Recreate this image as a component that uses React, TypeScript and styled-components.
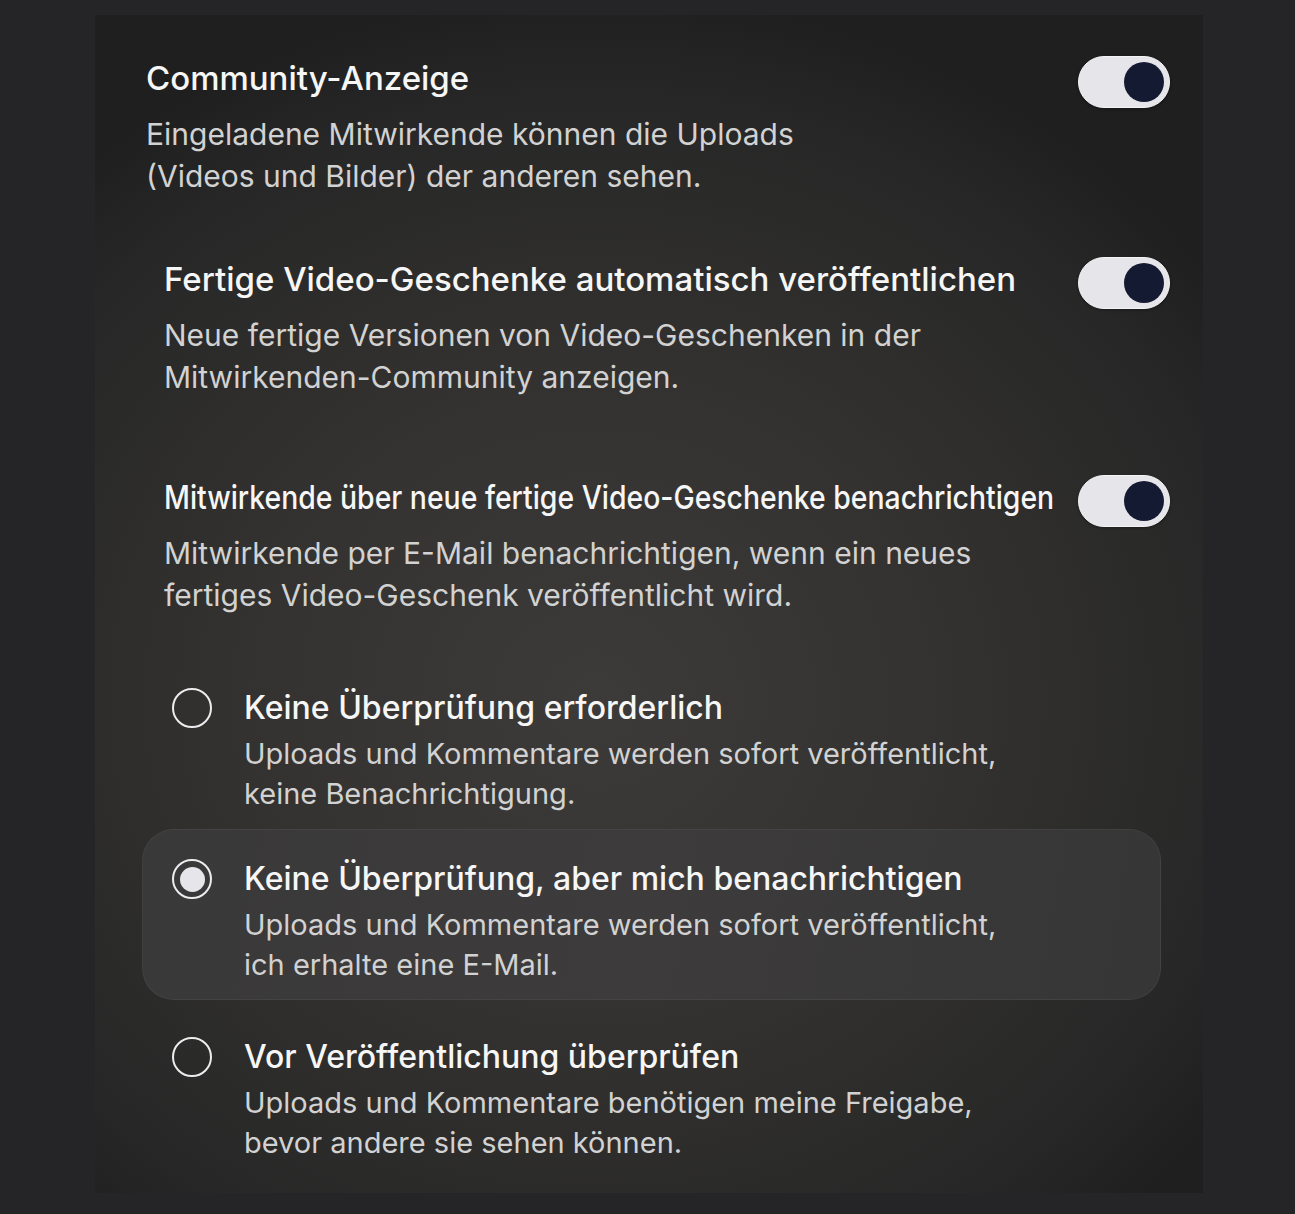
import styled, { createGlobalStyle } from "styled-components";

const GlobalStyle = createGlobalStyle`
    html, body {
        margin: 0;
        padding: 0;
        background: #252427;
    }
    body {
        font-family: Inter, "Noto Sans", "Liberation Sans", sans-serif;
        -webkit-font-smoothing: antialiased;
    }
`

type SectionData = {
    title: string
    text: string[]
    indent: boolean
    space: number
    narrow?: boolean
}

type OptionData = {
    title: string
    text: string[]
    checked: boolean
    space: number
}

const sections: SectionData[] = [{
    title: "Community-Anzeige",
    text: ["Eingeladene Mitwirkende können die Uploads", "(Videos und Bilder) der anderen sehen."],
    indent: false,
    space: 0
}, {
    title: "Fertige Video-Geschenke automatisch veröffentlichen",
    text: ["Neue fertige Versionen von Video-Geschenken in der", "Mitwirkenden-Community anzeigen."],
    indent: true,
    space: 60
}, {
    title: "Mitwirkende über neue fertige Video-Geschenke benachrichtigen",
    text: ["Mitwirkende per E-Mail benachrichtigen, wenn ein neues", "fertiges Video-Geschenk veröffentlicht wird."],
    indent: true,
    space: 77,
    narrow: true
},]

const options: OptionData[] = [{
    title: "Keine Überprüfung erforderlich",
    text: ["Uploads und Kommentare werden sofort veröffentlicht,", "keine Benachrichtigung."],
    checked: false,
    space: 0
}, {
    title: "Keine Überprüfung, aber mich benachrichtigen",
    text: ["Uploads und Kommentare werden sofort veröffentlicht,", "ich erhalte eine E-Mail."],
    checked: true,
    space: 0
}, {
    title: "Vor Veröffentlichung überprüfen",
    text: ["Uploads und Kommentare benötigen meine Freigabe,", "bevor andere sie sehen können."],
    checked: false,
    space: 7
},]

export default function App() {
    return (
        <>
            <GlobalStyle/>
            <Page>
                <Panel>
                    {sections.map((section, index) => <Section key={index} indent={section.indent} space={section.space}>
                        <SectionText>
                            <Title narrow={section.narrow}>{section.title}</Title>
                            <Description>
                                {section.text.map((line, i) => <div key={i}>{line}</div>)}
                            </Description>
                        </SectionText>
                        <Toggle>
                            <Knob/>
                        </Toggle>
                    </Section>)}
                    <OptionList>
                        {options.map((option, index) => <Option key={index} checked={option.checked} space={option.space}>
                            <Radio checked={option.checked}/>
                            <div>
                                <OptionTitle>{option.title}</OptionTitle>
                                <OptionText>
                                    {option.text.map((line, i) => <div key={i}>{line}</div>)}
                                </OptionText>
                            </div>
                        </Option>)}
                    </OptionList>
                </Panel>
            </Page>
        </>
    );
}

const Page = styled.div`
    padding: 15px 92px 21px 95px;
`
const Panel = styled.div`
    width: 1108px;
    box-sizing: border-box;
    padding: 41px 33px 15px 51px;
    background: radial-gradient(ellipse 70% 60% at 45% 58%, #3c3b39 0%, #333230 45%, #272727 85%, #1f1f1f 100%);
    display: flex;
    flex-direction: column;
`
type sectionProps = {
    indent: boolean
    space: number
}
const Section = styled.div<sectionProps>`
    display: flex;
    align-items: flex-start;
    justify-content: space-between;
    padding-left: ${props => props.indent ? "18px" : "0"};
    margin-top: ${props => props.space}px;
`
const SectionText = styled.div`
    display: flex;
    flex-direction: column;
    min-width: 0;
`
type titleProps = {
    narrow?: boolean
}
const Title = styled.div<titleProps>`
    font-size: 33px;
    line-height: 44px;
    font-weight: 500;
    color: #f6f6f6;
    white-space: nowrap;
    transform: ${props => props.narrow ? "scaleX(0.86)" : "none"};
    transform-origin: left center;
`
const Description = styled.div`
    margin-top: 13px;
    font-size: 30px;
    line-height: 42px;
    color: #d2d2d2;
    white-space: nowrap;
`
const Toggle = styled.div`
    width: 92px;
    height: 52px;
    flex-shrink: 0;
    box-sizing: border-box;
    border-radius: 26px;
    background: #e6e5ea;
    border: 1px solid #f4f4f6;
    display: flex;
    align-items: center;
    justify-content: flex-end;
    padding-right: 5px;
    box-shadow: 0 1px 3px rgba(0, 0, 0, 0.35);
`
const Knob = styled.div`
    width: 40px;
    height: 40px;
    border-radius: 50%;
    background: #141a31;
`
const OptionList = styled.div`
    margin: 42px 9px 0 -4px;
    display: flex;
    flex-direction: column;
`
type optionProps = {
    checked: boolean
    space: number
}
const Option = styled.div<optionProps>`
    display: grid;
    grid-template-columns: 40px 1fr;
    column-gap: 32px;
    margin-top: ${props => props.space}px;
    padding: 27px 30px 14px 29px;
    border-radius: 32px;
    background: ${props => props.checked ? "linear-gradient(100deg, #3a3939 0%, #3d3b3b 50%, #363636 100%)" : "transparent"};
    border: 1px solid ${props => props.checked ? "rgba(255, 255, 255, 0.05)" : "transparent"};
`
type radioProps = {
    checked: boolean
}
const Radio = styled.div<radioProps>`
    width: 40px;
    height: 40px;
    margin-top: 2px;
    box-sizing: border-box;
    border-radius: 50%;
    border: 2.5px solid #ececee;
    display: flex;
    align-items: center;
    justify-content: center;

    &::after {
        content: "";
        display: ${props => props.checked ? "block" : "none"};
        width: 25px;
        height: 25px;
        border-radius: 50%;
        background: #e6e5ea;
    }
`
const OptionTitle = styled.div`
    font-size: 32px;
    line-height: 44px;
    font-weight: 500;
    color: #f6f6f6;
    white-space: nowrap;
`
const OptionText = styled.div`
    margin-top: 4px;
    font-size: 29px;
    line-height: 40px;
    color: #d2d2d2;
    white-space: nowrap;
`
